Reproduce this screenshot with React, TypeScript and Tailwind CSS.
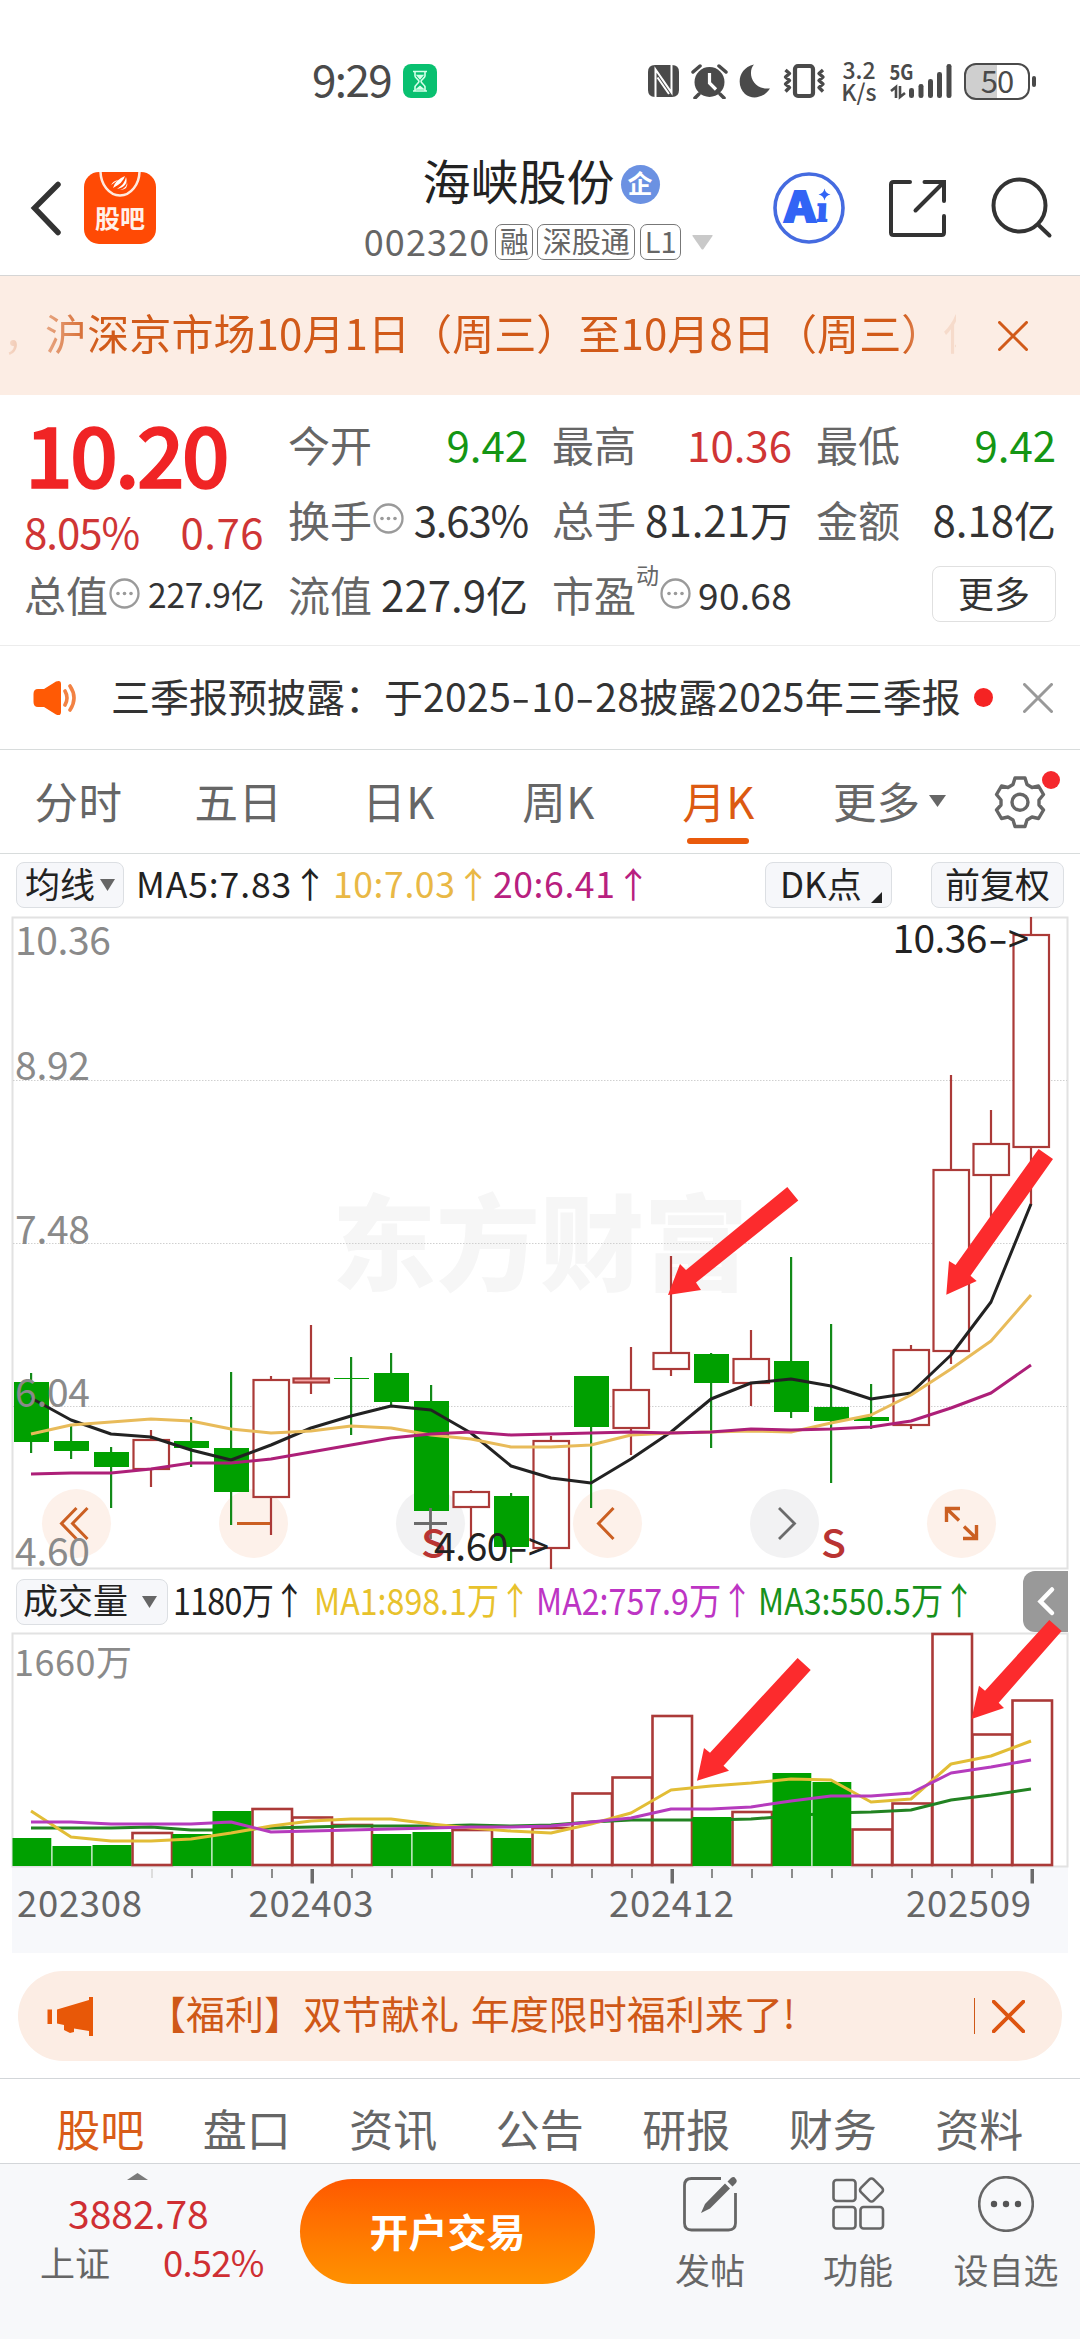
import React from "react";

type Candle = { up: boolean; top: number; bottom: number; high: number; low: number };

const g = (top: number, bottom: number, high: number, low: number): Candle => ({ up: false, top, bottom, high, low });
const r = (top: number, bottom: number, high: number, low: number): Candle => ({ up: true, top, bottom, high, low });

const candles: Candle[] = [
  g(1383, 1443, 1374, 1454), g(1442, 1452, 1427, 1460), g(1453, 1468, 1448, 1509), r(1441, 1470, 1431, 1488),
  g(1442, 1449, 1418, 1468), g(1449, 1493, 1373, 1526), r(1381, 1498, 1377, 1536), r(1379.5, 1383.5, 1326, 1395),
  g(1379, 1380, 1358, 1436), g(1374, 1403, 1354, 1407), g(1402, 1512, 1386, 1512), r(1493, 1508, 1491, 1543),
  g(1497, 1548, 1494, 1564), r(1442, 1549, 1437, 1570), g(1377, 1428, 1377, 1509), r(1391, 1429, 1348, 1456),
  r(1354, 1370, 1257, 1377), g(1355, 1384, 1354, 1449), r(1360, 1384, 1331, 1407), g(1362, 1413, 1258, 1419),
  g(1408, 1422, 1325, 1484), g(1418, 1422, 1385, 1430), r(1351, 1426, 1346, 1430), r(1171, 1352, 1076, 1365),
  r(1145, 1176, 1111, 1220), r(936, 1148, 918, 1206),
];
const ma5 = [1399, 1421, 1435, 1438, 1451, 1461, 1446, 1429, 1417, 1407, 1411, 1434, 1467, 1479, 1484, 1460, 1433, 1400, 1384, 1380, 1387, 1400, 1394, 1356, 1303, 1205];
const ma10 = [1435, 1426, 1423, 1420, 1422, 1430, 1434, 1432, 1427, 1429, 1436, 1440, 1448, 1448, 1446, 1436, 1434, 1433, 1432, 1433, 1424, 1416, 1396, 1370, 1342, 1296];
const ma20 = [1475, 1474, 1474, 1470, 1464, 1464, 1460, 1453, 1446, 1439, 1435, 1433, 1436, 1435, 1434, 1433, 1434, 1433, 1430, 1431, 1430, 1428, 1422, 1409, 1394, 1366];

const volumes: [boolean, number][] = [
  [false, 1839], [false, 1847], [false, 1846], [true, 1834], [false, 1835], [false, 1812], [true, 1810], [true, 1818.5],
  [true, 1826], [false, 1835], [false, 1833], [true, 1831], [false, 1839], [true, 1829], [true, 1794.5], [true, 1778.5],
  [true, 1717], [false, 1818], [true, 1813], [false, 1774], [false, 1783], [true, 1830.5], [true, 1804.5], [true, 1635],
  [true, 1735.5], [true, 1701.5],
];
const vma1 = [1812, 1838, 1842, 1842, 1840, 1834, 1827, 1822, 1820, 1820, 1825, 1829, 1832, 1834, 1825, 1814, 1791, 1787, 1784, 1780, 1781, 1803, 1800, 1765, 1757, 1742];
const vma2 = [1823, 1823, 1825, 1825, 1825, 1823, 1833, 1832, 1831, 1830, 1829, 1828, 1828, 1827, 1823, 1819, 1810, 1810, 1808, 1802, 1797, 1797, 1794, 1774, 1768, 1761];
const vma3 = [1829, 1829, 1829, 1828, 1831, 1831, 1829, 1828, 1827, 1827, 1827, 1826, 1827, 1826, 1823, 1821, 1821, 1821, 1820, 1817, 1814, 1813, 1811, 1801, 1796, 1790];

const cx = (i: number) => 31 + 40 * i;
const line = (ys: number[]) => ys.map((y, i) => `${cx(i)},${y}`).join(" ");

function StatusBar() {
  return (
    <div className="flex h-[120px] items-center pt-[42px] pl-[312px] text-[#4a4a4a]">
      <span className="w-[91px] text-[44px] leading-none tracking-[-1.6px] -translate-y-[3px]">9:29</span>
      <svg className="h-[34px] w-[34px]" viewBox="0 0 34 34">
        <rect width="34" height="34" rx="8" fill="#09c070" />
        <g fill="none" stroke="#d6ffe9" strokeWidth="1.6">
          <path d="M10 7.5h14M10 27h14M12 8v4c0 2 4 3.500 4 5.300S12 21 12 23v3.500M22 8v4c0 2-4 3.500-4 5.300S22 21 22 23v3.500" />
          <path d="M14.500 11.500h5L17 14.500zM14 25l3-2.500 3 2.500z" fill="#d6ffe9" />
        </g>
      </svg>
      <svg className="ml-[211px] h-[34px] w-[31px]" viewBox="0 0 31 34">
        <path d="M7 1h17q7 0 7 7v18q0 7-7 7H7q-7 0-7-7V8q0-7 7-7z" fill="#4a4a4a" />
        <path d="M7.500 33V5.500L22 26.500M23.500 1V28.500L9 7.500M9.500 13.500L21 30" fill="none" stroke="#fff" strokeWidth="2" />
      </svg>
      <svg className="ml-[12px] h-[36px] w-[37px]" viewBox="0 0 37 36">
        <circle cx="18.500" cy="19" r="15" fill="#4a4a4a" />
        <path d="M2 9l7-6M35 9l-7-6M8 31l-4 4M29 31l4 4" stroke="#4a4a4a" strokeWidth="3.500" strokeLinecap="round" />
        <path d="M18.500 10v10l6.500 6.500" fill="none" stroke="#fff" strokeWidth="3.200" />
      </svg>
      <svg className="ml-[11px] h-[34px] w-[32px]" viewBox="0 0 32 34">
        <path d="M15 0.500C8 8 13 26 31 24.500 25 34 13 36 6 30-3 22-1 4 15 .5z" fill="#4a4a4a" />
      </svg>
      <svg className="ml-[12px] h-[36px] w-[43px]" viewBox="0 0 43 36">
        <rect x="12" y="3" width="18" height="30" rx="3" fill="none" stroke="#4a4a4a" strokeWidth="4.200" />
        <path d="M2.500 7l4 3.500-4 3.500 4 3.500-4 3.500 4 3.500-4 4M40 7l-4 3.500 4 3.500-4 3.500 4 3.500-4 3.500 4 4" fill="none" stroke="#4a4a4a" strokeWidth="3.400" strokeLinejoin="round" />
      </svg>
      <div className="ml-[15px] flex w-[36px] flex-col items-center text-[23px] font-medium leading-[22px] -translate-y-[1px]">
        <span>3.2</span>
        <span>K/s</span>
      </div>
      <svg className="ml-[10px] h-[40px] w-[66px] overflow-visible" viewBox="886 61 66 40">
        <text x="888.500" y="80" fontSize="21" fontWeight="700" fill="#4a4a4a" textLength="24" lengthAdjust="spacingAndGlyphs">5G</text>
        <path d="M890 91l5-4v11M904 93l-5 4V86" fill="none" stroke="#4a4a4a" strokeWidth="2.600" />
        <g fill="#4a4a4a">
          <rect x="908" y="88" width="5" height="10" rx="2.300" />
          <rect x="917.500" y="84" width="5" height="14" rx="2.300" />
          <rect x="927" y="79" width="5" height="19" rx="2.300" />
          <rect x="936" y="72" width="5" height="26" rx="2.300" />
          <rect x="945.500" y="64" width="5" height="34" rx="2.300" />
        </g>
      </svg>
      <div className="relative ml-[11px] flex h-[37px] w-[66px] items-center justify-center rounded-[12px] border-[2.500px] border-[#4a4a4a] bg-[linear-gradient(90deg,#cfcfcf_50%,#fff_50%)]">
        <span className="text-[31px] leading-none tracking-[-1px] -translate-y-[2px]">50</span>
      </div>
      <div className="ml-[2px] h-[11px] w-[4px] rounded-full bg-[#4a4a4a]" />
    </div>
  );
}

function Tag({ children, className }: { children: React.ReactNode; className: string }) {
  return (
    <span className={"flex h-[36px] items-center justify-center rounded-[7px] border border-[#777] text-[29px] leading-none " + className}>
      <span className="-translate-y-[2px]">{children}</span>
    </span>
  );
}

function Header() {
  return (
    <header className="flex h-[156px] border-b border-[#d5d5d5]">
      <div className="flex w-[342px] items-center pt-[20px] pl-[29px]">
        <svg className="h-[60px] w-[34px]" viewBox="29 178 34 60">
          <path d="M58 184.500L34.500 208L58 232.500" fill="none" stroke="#333" strokeWidth="5.500" strokeLinecap="round" />
        </svg>
        <div className="ml-[21px] flex h-[72px] w-[72px] flex-col items-center overflow-hidden rounded-[15px] bg-[#ff4a05]">
          <svg className="h-[30px] w-[72px]" viewBox="0 0 72 30">
            <path d="M16.500 -1a19.500 24.500 0 0 0 39 0" fill="none" stroke="#ffe9df" strokeWidth="2.500" />
            <path d="M27 13q2-4 7-5-4 3-7 5zM29 16q2-8 12-12-2 7-12 12zM33 17q8-5 9-12 3 9-9 12zM36 18q7-2 7-8 2 7-7 8z" fill="#fff" />
          </svg>
          <span className="text-[25px] font-bold leading-[30px] text-[#fff1ea]">股吧</span>
        </div>
      </div>
      <div className="mt-[32px] flex w-[398px] flex-col items-center">
        <div className="flex h-[56px] items-center">
          <span className="text-[48px] leading-none text-[#222] -translate-y-[1px]">海峡股份</span>
          <span className="ml-[6px] flex h-[39px] w-[39px] items-center justify-center rounded-full bg-[#6b91e2] text-[25px] font-bold leading-none text-white mt-[8px]">
            <span className="-translate-y-[2px]">企</span>
          </span>
        </div>
        <div className="mt-[4px] flex h-[60px] items-center text-[#666]">
          <span className="text-[36px] leading-none tracking-[1.1px] -translate-y-[2px]">002320</span>
          <Tag className="ml-[5px] w-[38px]">融</Tag>
          <Tag className="ml-[4px] w-[98px]">深股通</Tag>
          <Tag className="ml-[5px] w-[41px]">L1</Tag>
          <svg className="mr-[5px] ml-[11px] h-[15px] w-[21px]" viewBox="0 0 21 15">
            <path d="M1 0h19q1 0 .5 1L11.500 14q-1 1-2 0L.5 1Q0 0 1 0z" fill="#c9c9c9" />
          </svg>
        </div>
      </div>
      <div className="flex w-[340px] items-center pt-[20px] pl-[32px]">
        <svg className="h-[74px] w-[74px] overflow-visible" viewBox="771.500 171 74 74">
          <circle cx="808.500" cy="208" r="34" fill="#fff" stroke="#456be0" strokeWidth="3.600" />
          <g fill="#3264f5" fontWeight="900" fontFamily="'Noto Sans CJK SC'">
            <text x="784" y="221.500" fontSize="41" textLength="31" lengthAdjust="spacingAndGlyphs" stroke="#3264f5" strokeWidth="1.800">A</text>
            <text x="816" y="221.500" fontSize="37" transform="skewX(-3) translate(11.500 0)" stroke="#3264f5" strokeWidth="1.800">ı</text>
            <path d="M824 188.500q1 5 6 6-5 1-6 6-1-5-6-6 5-1 6-6z" />
          </g>
        </svg>
        <svg className="ml-[40px] h-[62px] w-[62px]" viewBox="885.500 177 62 62">
          <path d="M909.500 182H893q-2.500 0-2.500 2.500V232.500q0 2.500 2.500 2.500H941q2.500 0 2.500-2.500V216M924 182H943.500V201M943 182.500L915 210.500" fill="none" stroke="#333" strokeWidth="4" strokeLinecap="round" />
        </svg>
        <svg className="ml-[42px] h-[64px] w-[64px]" viewBox="989 176 64 64">
          <g fill="none" stroke="#333" strokeWidth="4" strokeLinecap="round">
            <circle cx="1018.500" cy="205.500" r="26" />
            <path d="M1037.500 225L1048.500 235.500" />
          </g>
        </svg>
      </div>
    </header>
  );
}

function Cross({ className, width = 3 }: { className: string; width?: number }) {
  return (
    <svg className={className} viewBox="0 0 30 30">
      <path d="M1.500 1.500L28.500 28.500M28.500 1.500L1.500 28.500" stroke="currentColor" strokeWidth={width} strokeLinecap="round" />
    </svg>
  );
}

function Banner() {
  return (
    <div className="flex h-[119px] items-center bg-[#fcede4] text-[#d15a19]">
      <div className="ml-[3px] w-[953px] overflow-hidden whitespace-nowrap text-[42px] leading-[60px] tracking-[0.1px] [mask-image:linear-gradient(90deg,rgba(0,0,0,0.1),rgba(0,0,0,0.4)_35px,#000_95px,#000_900px,rgba(0,0,0,0.12)_940px)] -translate-y-[4px]">
        ，沪深京市场10月1日（周三）至10月8日（周三）休市
      </div>
      <Cross className="ml-[42px] h-[30px] w-[30px]" />
    </div>
  );
}

function Dots() {
  return (
    <svg className="ml-[1px] h-[31px] w-[31px] shrink-0" viewBox="0 0 31 31">
      <circle cx="15.500" cy="15.500" r="14" fill="none" stroke="#9a9a9a" strokeWidth="2.300" />
      <g fill="#9a9a9a">
        <circle cx="9" cy="15.500" r="1.800" />
        <circle cx="15.500" cy="15.500" r="1.800" />
        <circle cx="22" cy="15.500" r="1.800" />
      </g>
    </svg>
  );
}

function Stat({ label, extra, value, valueClass }: { label: string; extra?: React.ReactNode; value: string; valueClass: string }) {
  return (
    <div className="flex h-[75px] items-center justify-between">
      <div className="flex items-center">
        <span className="text-[#666]">{label}</span>
        {extra}
      </div>
      <span className={valueClass}>{value}</span>
    </div>
  );
}

function Quote() {
  return (
    <section className="flex h-[251px] gap-[24px] border-b border-[#ececec] px-[24px] pt-[11px] text-[42px] leading-[50px] text-[#333]">
      <div className="w-[240px]">
        <div className="flex h-[92px] items-center pl-[1px] text-[84px] font-medium leading-none tracking-[-3px] text-[#f02425] [-webkit-text-stroke:1.5px_#f02425]">10.20</div>
        <div className="mt-[7px] flex h-[51px] items-center justify-between text-[#cf3535]">
          <span className="tracking-[-1px]">8.05%</span>
          <span className="tracking-[0.5px]">0.76</span>
        </div>
        <Stat label="总值" extra={<Dots />} value="227.9亿" valueClass="text-[33.500px] tracking-[-0.2px]" />
      </div>
      <div className="w-[240px]">
        <Stat label="今开" value="9.42" valueClass="text-[#149614]" />
        <Stat label="换手" extra={<Dots />} value="3.63%" valueClass="tracking-[-1.2px]" />
        <Stat label="流值" value="227.9亿" valueClass="" />
      </div>
      <div className="w-[240px]">
        <Stat label="最高" value="10.36" valueClass="text-[#cf3535]" />
        <Stat label="总手" value="81.21万" valueClass="" />
        <Stat
          label="市盈"
          extra={
            <>
              <span className="-mt-[38px] text-[23px] leading-none text-[#666]">动</span>
              <Dots />
            </>
          }
          value="90.68"
          valueClass="text-[37px] tracking-[0.3px]"
        />
      </div>
      <div className="w-[240px]">
        <Stat label="最低" value="9.42" valueClass="text-[#149614]" />
        <Stat label="金额" value="8.18亿" valueClass="" />
        <div className="flex h-[75px] items-center justify-end">
          <span className="flex h-[56px] w-[124px] items-center justify-center rounded-[8px] border-[1.500px] border-[#e0e0e0] pb-[4px] text-[36px]">更多</span>
        </div>
      </div>
    </section>
  );
}

function Hyphen() {
  return <span className="mx-[3px] inline-block scale-x-[1.4]">-</span>;
}

function Notice() {
  return (
    <div className="flex h-[104px] items-center border-b border-[#d8dcdc] text-[39px] text-[#333]">
      <svg className="ml-[32px] h-[38px] w-[48px]" viewBox="32 678 48 38">
        <path d="M38 688H44L56 680.500Q61 678.500 61 683V711Q61 715.500 56 713.500L44 706H38Q33.500 706 33.500 701V693Q33.500 688 38 688z" fill="#ff5a05" />
        <path d="M65 690q4 7 0 14M70 685q8 12 0 24" fill="none" stroke="#f28243" strokeWidth="3.600" strokeLinecap="round" />
      </svg>
      <span className="ml-[31px] whitespace-nowrap leading-[50px] -translate-y-[3px]">
        三季报预披露：于<span className="tracking-[0.4px]">2025<Hyphen />10<Hyphen />28</span>披露<span className="tracking-[0.2px]">2025</span>年三季报
      </span>
      <span className="ml-[13px] h-[19px] w-[19px] rounded-full bg-[#f52323]" />
      <Cross className="ml-[30px] h-[30px] w-[30px] text-[#999]" />
    </div>
  );
}

function PeriodTabs() {
  const items = ["分时", "五日", "日K", "周K", "月K"];
  return (
    <nav className="flex h-[104px] border-b border-[#d8dcdc] text-[43.500px] text-[#666]">
      {items.map((t) => (
        <div key={t} className={"flex w-[160px] flex-col items-center " + (t === "月K" ? "text-[#dc5a12]" : "")}>
          <span className="mt-[19px] mr-[3px] h-[64px] leading-[64px] tracking-[0.5px]">{t}</span>
          {t === "月K" && <span className="mt-[5px] mr-[4px] h-[6px] w-[62px] rounded-full bg-[#e95a0c]" />}
        </div>
      ))}
      <div className="ml-[33px] flex h-[102px] items-center">
        <span>更多</span>
        <svg className="ml-[9px] h-[12px] w-[17px]" viewBox="0 0 17 12"><path d="M0 0h17L8.500 12z" fill="#666" /></svg>
      </div>
      <div className="relative ml-[47px] mt-[25px] h-[54px] w-[54px]">
        <svg className="h-[54px] w-[54px]" viewBox="0 0 54 54" fill="none" stroke="#666" strokeWidth="3.400" strokeLinejoin="round">
          <path d="M22 3h10l2 6.500 5 3 6.500-1.500 5 8.500L46 25v5l4.500 5-5 8.500-6.500-1.500-5 3-2 6.500H22l-2-6.500-5-3-6.500 1.500-5-8.500L8 30v-5l-4.500-5.500 5-8.500L15 12.500l5-3z" />
          <circle cx="27" cy="27.200" r="8" />
        </svg>
        <span className="absolute -top-[4px] left-[49px] h-[18px] w-[18px] rounded-full bg-[#f5282d]" />
      </div>
    </nav>
  );
}

function Chip({ className, children }: { className: string; children: React.ReactNode }) {
  return (
    <span className={"flex h-[46px] shrink-0 items-center rounded-[8px] border border-[#dcdfe3] bg-[#f6f7fa] text-[35px] leading-none " + className}>
      {children}
    </span>
  );
}

function Down() {
  return (
    <svg className="h-[12px] w-[15px]" viewBox="0 0 15 12"><path d="M0 0h15L7.500 12z" fill="#666" /></svg>
  );
}

function MaRow() {
  return (
    <div className="flex h-[62px] items-center text-[35.500px] leading-[46px] text-[#222]">
      <Chip className="ml-[16px] w-[108px] pl-[8px]">
        <span className="-translate-y-[3px]">均线</span>
        <span className="ml-[5px]"><Down /></span>
      </Chip>
      <span className="ml-[12px] w-[197px] whitespace-nowrap tracking-[0.9px] -translate-y-[2px]">MA5:7.83↑</span>
      <span className="w-[160px] whitespace-nowrap tracking-[0.6px] text-[#e9b845] -translate-y-[2px]">10:7.03↑</span>
      <span className="w-[272px] whitespace-nowrap tracking-[0.6px] text-[#b8207f] -translate-y-[2px]">20:6.41↑</span>
      <Chip className="w-[127px] pl-[14px]">
        <span className="-translate-y-[3px]">DK点</span>
        <svg className="ml-[9px] mt-[24px] h-[11px] w-[11px]" viewBox="0 0 11 11"><path d="M11 0v11H0z" fill="#222" /></svg>
      </Chip>
      <Chip className="ml-[39px] w-[133px] justify-center">
        <span className="-translate-y-[3px]">前复权</span>
      </Chip>
    </div>
  );
}

function PriceChart() {
  const buttons: [number, string][] = [
    [76.5, "#fdf1ea"], [253.5, "#fdf1ea"], [430.5, "#f2f2f3"], [607.5, "#fdf1ea"], [784.5, "#f2f2f3"], [961.5, "#fdf1ea"],
  ];
  const labels: [string, number, number][] = [["10.36", 956, 96], ["8.92", 1081, 75], ["7.48", 1245, 75], ["6.04", 1408, 75], ["4.60", 1567, 75]];
  return (
    <svg className="block h-[654px] w-[1080px]" viewBox="0 917 1080 654" fontFamily="'Noto Sans CJK SC', sans-serif">
      <text x="332" y="1284" fontSize="104" fontWeight="900" fill="#f6f6f6" textLength="416" lengthAdjust="spacingAndGlyphs">东方财富</text>
      <path d="M12.500 918.500H1067.500V1569.500H12.500z" fill="none" stroke="#e2e2e2" strokeWidth="2" />
      <g stroke="#d0d0d0" strokeWidth="1" strokeDasharray="1.500 1.500">
        <path d="M13 1081.500H1067M13 1244.500H1067M13 1407.500H1067" />
      </g>
      {buttons.map(([x, f]) => <circle key={x} cx={x} cy="1524.500" r="34.500" fill={f} />)}
      <g fill="none" stroke="#cb5f22" strokeWidth="3">
        <path d="M76.500 1509L61.500 1524.500L76.500 1540M87.500 1509L72.500 1524.500L87.500 1540" />
        <path d="M237 1524.500H270" />
        <path d="M613.500 1509L598.500 1524.500L613.500 1540" />
        <path d="M960 1509.500H946.500V1523M947 1510L959 1521.500M963 1539.500H976.500V1526M976 1539L964 1527.500" strokeWidth="3.400" />
      </g>
      {candles.map((c, i) => {
        const x = cx(i);
        if (c.up) {
          return (
            <g key={i} stroke="#ab3a38" strokeWidth="2.200" fill="none">
              <path d={`M${x} ${c.high}V${c.top}M${x} ${c.bottom}V${c.low}`} />
              <rect x={x - 17.5} y={c.top} width="35.500" height={c.bottom - c.top} fill={i === 7 ? "#f5a5a5" : "#fff"} />
            </g>
          );
        }
        return (
          <g key={i} fill="#00a000">
            <rect x={x - 1} y={c.high} width="2.200" height={c.low - c.high} fill="#128a18" />
            <rect x={x - 17} y={c.top} width="35" height={c.bottom - c.top} />
          </g>
        );
      })}
      <path d="M779 1509L794.500 1524.500L779 1540M414 1524.500H447M430.500 1509V1540" fill="none" stroke="#6b6b6b" strokeWidth="2.800" />
      <g fill="none" strokeWidth="3" strokeLinejoin="round">
        <polyline points={line(ma5)} stroke="#222" />
        <polyline points={line(ma10)} stroke="#e8bb5a" />
        <polyline points={line(ma20)} stroke="#ad1f78" />
      </g>
      <g fontSize="39" fill="#8a8a8a">
        {labels.map(([t, y, w]) => <text key={t} x="15" y={y} textLength={w}>{t}</text>)}
      </g>
      <g fontSize="39" fontWeight="500" fill="#b93432">
        <text x="421" y="1559" textLength="25" lengthAdjust="spacingAndGlyphs">S</text>
        <text x="821" y="1559" textLength="25" lengthAdjust="spacingAndGlyphs">S</text>
      </g>
      <g fontSize="39" fill="#222">
        <text x="892.500" y="954" textLength="95">10.36</text>
        <text x="988" y="954" textLength="20" lengthAdjust="spacingAndGlyphs">-</text>
        <text x="1008" y="954" textLength="21" lengthAdjust="spacingAndGlyphs">&gt;</text>
        <text x="434" y="1561.500" textLength="74.500">4.60</text>
        <text x="508" y="1561.500" textLength="20" lengthAdjust="spacingAndGlyphs">-</text>
        <text x="528" y="1561.500" textLength="21" lengthAdjust="spacingAndGlyphs">&gt;</text>
      </g>
      <g fill="#fc2b2d">
        <path d="M787.300 1188L798.300 1201.500L696 1283.500L701 1291L668 1296L680 1265L686 1271z" />
        <path d="M1038.600 1150L1053 1160L970.500 1276.700L976.700 1282L946.300 1295.700L949 1262L955.600 1266z" />
      </g>
    </svg>
  );
}

function VolText({ className, children }: { className: string; children: string }) {
  return (
    <span className={"shrink-0 " + className}>
      <span className="inline-block origin-left scale-x-[0.87] whitespace-nowrap -translate-y-[3px]">{children}</span>
    </span>
  );
}

function VolumeHeader() {
  return (
    <div className="flex h-[63px] items-center text-[37px] leading-[46px] text-[#222]">
      <Chip className="ml-[16px] w-[152px] pl-[6px]">
        <span className="-translate-y-[3px]">成交量</span>
        <span className="ml-[14px]"><Down /></span>
      </Chip>
      <VolText className="ml-[5px] w-[141px] tracking-[-0.8px]">1180万↑</VolText>
      <VolText className="w-[222px] text-[#e8c22c]">MA1:898.1万↑</VolText>
      <VolText className="w-[222px] text-[#bd35c4]">MA2:757.9万↑</VolText>
      <VolText className="w-[265px] text-[#17911b]">MA3:550.5万↑</VolText>
      <svg className="h-[61px] w-[45px] shrink-0 rounded-l-[12px] bg-[#999]" viewBox="1023 1572 45 61">
        <path d="M1052 1590.500L1040.500 1602.500L1052 1614" fill="none" stroke="#fff" strokeWidth="4.500" strokeLinecap="round" />
      </svg>
    </div>
  );
}

function VolumeChart() {
  const dates: [string, number][] = [["202308", 17], ["202403", 248.5], ["202412", 609], ["202509", 906]];
  return (
    <svg className="block h-[320px] w-[1080px] overflow-visible" viewBox="0 1634 1080 320" fontFamily="'Noto Sans CJK SC', sans-serif">
      <rect x="12" y="1868" width="1056" height="86" fill="#f7f8fb" />
      <path d="M12.500 1634.500H1067.500V1867.500H12.500z" fill="none" stroke="#e2e2e2" strokeWidth="2" />
      <text x="14" y="1677" fontSize="36" fill="#8a8a8a" textLength="118">1660万</text>
      {volumes.map(([up, y], i) =>
        up ? <rect key={i} x={12.5 + 40 * i} y={y} width="39.500" height={1866 - y} fill="#fff" stroke="#ab3a38" strokeWidth="2.600" /> : null,
      )}
      <polyline points={line(vma3)} fill="none" stroke="#228322" strokeWidth="3" />
      {volumes.map(([up, y], i) =>
        up ? null : <rect key={i} x={12.5 + 40 * i} y={y} width="38.800" height={1867 - y} fill="#00a000" />,
      )}
      <g fill="none" strokeWidth="3" strokeLinejoin="round">
        <polyline points={line(vma1)} stroke="#e2bd36" />
        <polyline points={line(vma2)} stroke="#b53bbd" />
      </g>
      {candles.map((_, i) =>
        i < 3 ? null : i === 7 || i === 16 || i === 25 ? (
          <rect key={i} x={cx(i) - 0.5} y="1870" width="3.500" height="14.500" fill="#6b6b6b" />
        ) : (
          <rect key={i} x={cx(i)} y="1870" width="2" height="9" fill={i === 3 ? "#ddd" : "#8c8c8c"} />
        ),
      )}
      <g fontSize="36.500" fill="#666">
        {dates.map(([t, x]) => <text key={t} x={x} y="1918" textLength="125">{t}</text>)}
      </g>
      <g fill="#fc2b2d">
        <path d="M797.600 1659L810.700 1671L723.500 1766.700L729 1771.700L697 1781.700L704 1749L710 1753.700z" />
        <path d="M1049.300 1621L1061.700 1632L998.700 1703.700L1004 1709L971.500 1720L979 1686.700L985 1691.700z" />
      </g>
    </svg>
  );
}

function Promo() {
  return (
    <div className="mx-[18px] mt-[18px] mb-[17px] flex h-[90px] items-center rounded-full bg-[#fcede4] text-[39px] text-[#cf5817]">
      <svg className="ml-[28px] h-[42px] w-[50px]" viewBox="46 1995 50 42">
        <path d="M47.500 2009.500h4.500v14.500h-4.500zM57 2009.500L89 2000V1997h4v39h-4v-5L74 2028.500V2032L70 2033l-6-3V2025l-7-1.500z" fill="#e85808" />
      </svg>
      <span className="ml-[51px] w-[827px] whitespace-nowrap leading-[56px] [word-spacing:3px] -translate-y-[4px]">【福利】双节献礼 年度限时福利来了!</span>
      <span className="h-[36px] w-px shrink-0 bg-[#cf5817]" />
      <Cross className="ml-[17px] h-[33px] w-[33px] shrink-0 text-[#dd5410]" width={3.4} />
    </div>
  );
}

function SectionTabs() {
  return (
    <nav className="flex h-[86px] border-y border-[#d3d6d9] pl-[27px] text-[44px] leading-[98px] text-[#666]">
      {["股吧", "盘口", "资讯", "公告", "研报", "财务", "资料"].map((t, i) => (
        <span key={t} className={"w-[146.500px] text-center " + (i === 0 ? "text-[#d95c18]" : "")}>{t}</span>
      ))}
    </nav>
  );
}

function BottomBar() {
  return (
    <footer className="flex h-[175px] bg-[#f7f8fa] text-[35px] text-[#666]">
      <div className="ml-[24px] flex w-[242px] flex-col pl-[16px] text-[#cf2f33]">
        <svg className="mt-[9px] ml-[87px] h-[7px] w-[21px]" viewBox="0 0 21 7"><path d="M0 7L10.500 0L21 7z" fill="#7a7a7a" /></svg>
        <span className="mt-[5px] ml-[28px] text-[39px] leading-[54px]">3882.78</span>
        <div className="mt-[-3px] flex items-center leading-[52px]">
          <span className="text-[#666]">上证</span>
          <span className="ml-[53px] text-[36.500px] tracking-[-0.8px]">0.52%</span>
        </div>
      </div>
      <button className="ml-[34px] mt-[15px] h-[105px] w-[295px] rounded-full bg-gradient-to-b from-[#fe5800] to-[#ff9100] pb-[3px] text-[39px] font-bold text-white">开户交易</button>
      <div className="ml-[41px] mt-[12px] flex">
        <div className="flex w-[148px] flex-col items-center">
          <svg className="h-[56px] w-[56px]" viewBox="682 2176 56 56" fill="none" stroke="#666" strokeWidth="2.800">
            <path d="M721 2178.500H691.500q-7 0-7 7V2223q0 7 7 7H728.500q7 0 7-7V2193" />
            <path d="M701 2213L705 2204L725 2183.500L730 2188.500L710 2208.500zM727.500 2181.500L731 2178Q734 2176 735.500 2178.500Q738 2181 735.500 2183.500L732.500 2186.500z" fill="#666" stroke="none" />
          </svg>
          <span className="mt-[13px] leading-[48px]">发帖</span>
        </div>
        <div className="flex w-[148px] flex-col items-center">
          <svg className="h-[56px] w-[56px]" viewBox="830 2176 56 56" fill="none" stroke="#666" strokeWidth="2.600">
            <rect x="833.500" y="2180" width="22" height="21" rx="3" />
            <rect x="833.500" y="2207" width="22" height="21.500" rx="3" />
            <rect x="860.500" y="2207" width="22.500" height="21.500" rx="3" />
            <rect x="862.500" y="2181" width="18" height="18" rx="3" transform="rotate(45 871.500 2190)" />
          </svg>
          <span className="mt-[13px] leading-[48px]">功能</span>
        </div>
        <div className="flex w-[148px] flex-col items-center">
          <svg className="h-[56px] w-[56px]" viewBox="978 2176 56 56">
            <circle cx="1006" cy="2204" r="26.800" fill="none" stroke="#666" strokeWidth="2.600" />
            <g fill="#555"><circle cx="994" cy="2204" r="3.200" /><circle cx="1006" cy="2204" r="3.200" /><circle cx="1018" cy="2204" r="3.200" /></g>
          </svg>
          <span className="mt-[13px] leading-[48px]">设自选</span>
        </div>
      </div>
    </footer>
  );
}

export default function App() {
  return (
    <div className="h-[2340px] w-[1080px] overflow-hidden bg-white [font-family:'Noto_Sans_CJK_SC',sans-serif]">
      <StatusBar />
      <Header />
      <Banner />
      <Quote />
      <Notice />
      <PeriodTabs />
      <MaRow />
      <PriceChart />
      <VolumeHeader />
      <VolumeChart />
      <Promo />
      <SectionTabs />
      <BottomBar />
    </div>
  );
}
